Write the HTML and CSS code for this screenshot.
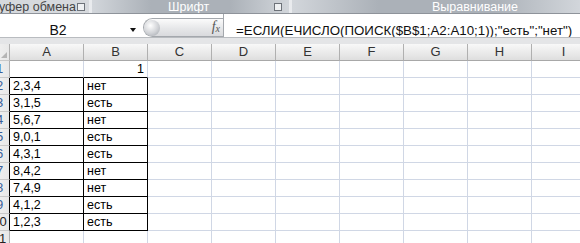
FILE: index.html
```html
<html>
<head>
    <link rel="stylesheet" href="styles.css">
</head>
<body>
    <div class="ribbon">
        <div class="group clip">
            <span class="label">Буфер обмена</span>
            <i class="launcher"></i>
        </div>
        <div class="group font">
            <span class="label">Шрифт</span>
            <i class="launcher"></i>
        </div>
        <div class="group align">
            <span class="label">Выравнивание</span>
        </div>
    </div>

    <div class="formula-bar">
        <div class="name-box">
            <span class="name">B2</span>
            <i class="arrow"></i>
        </div>
        <div class="fx-button">
            <i class="knob"></i>
            <span class="fx">f<sub>x</sub></span>
        </div>
        <div class="formula">=ЕСЛИ(ЕЧИСЛО(ПОИСК($B$1;A2:A10;1));"есть";"нет")</div>
    </div>

    <div class="sheet-gap"></div>

    <div class="sheet">
        <table class="grid">
            <tr class="head">
                <th class="corner"><i class="corner-mark"></i></th>
                <th class="col-a">A</th><th>B</th><th>C</th><th>D</th><th>E</th><th>F</th><th>G</th><th>H</th><th>I</th>
            </tr>
            <tr>
                <th class="row-num">1</th>
                <td class="top"></td><td class="top num">1</td><td></td><td></td><td></td><td></td><td></td><td></td><td></td>
            </tr>
            <tr>
                <th class="row-num boxed">2</th>
                <td class="box">2,3,4</td><td class="box">нет</td><td></td><td></td><td></td><td></td><td></td><td></td><td></td>
            </tr>
            <tr>
                <th class="row-num boxed">3</th>
                <td class="box">3,1,5</td><td class="box">есть</td><td></td><td></td><td></td><td></td><td></td><td></td><td></td>
            </tr>
            <tr>
                <th class="row-num boxed">4</th>
                <td class="box">5,6,7</td><td class="box">нет</td><td></td><td></td><td></td><td></td><td></td><td></td><td></td>
            </tr>
            <tr>
                <th class="row-num boxed">5</th>
                <td class="box">9,0,1</td><td class="box">есть</td><td></td><td></td><td></td><td></td><td></td><td></td><td></td>
            </tr>
            <tr>
                <th class="row-num boxed">6</th>
                <td class="box">4,3,1</td><td class="box">есть</td><td></td><td></td><td></td><td></td><td></td><td></td><td></td>
            </tr>
            <tr>
                <th class="row-num boxed">7</th>
                <td class="box">8,4,2</td><td class="box">нет</td><td></td><td></td><td></td><td></td><td></td><td></td><td></td>
            </tr>
            <tr>
                <th class="row-num boxed">8</th>
                <td class="box">7,4,9</td><td class="box">нет</td><td></td><td></td><td></td><td></td><td></td><td></td><td></td>
            </tr>
            <tr>
                <th class="row-num boxed">9</th>
                <td class="box">4,1,2</td><td class="box">есть</td><td></td><td></td><td></td><td></td><td></td><td></td><td></td>
            </tr>
            <tr>
                <th class="row-num boxed">10</th>
                <td class="box">1,2,3</td><td class="box">есть</td><td></td><td></td><td></td><td></td><td></td><td></td><td></td>
            </tr>
            <tr>
                <th class="row-num">11</th>
                <td></td><td></td><td></td><td></td><td></td><td></td><td></td><td></td><td></td>
            </tr>
        </table>
    </div>
</body>
</html>
```

FILE: styles.css
```css
body {
    margin: 0;
    background-color: #fff;
    font-family: "Liberation Sans", Arial, sans-serif;
    overflow: hidden;
    width: 580px;
    height: 243px;
}

/* ribbon group labels */
.ribbon {
    display: flex;
    height: 13px;
    border-bottom: 1px solid #8e939a;
    background-color: #d4d7dc;
    overflow: hidden;
}

.group {
    flex-shrink: 0;
    display: flex;
    align-items: center;
    box-sizing: border-box;
    height: 13px;
    font-size: 12.5px;
    color: #fff;
    border-right: 3px solid #e9ebee;
    background: linear-gradient(to right, #d2d6db, #abb1b8 30%, #abb1b8 70%, #d2d6db);
    overflow: hidden;
    white-space: nowrap;
}

.group.clip {
    width: 92px;
    background: #d6d9dd;
    color: #444;
}

.group.clip .label {
    margin-left: -9px;
}

.group.font {
    width: 200px;
    padding-left: 76px;
}

.group.align {
    flex: 1;
    padding-left: 140px;
    border-right: none;
}

.launcher {
    flex-shrink: 0;
    width: 6px;
    height: 6px;
    border: 1px solid #6d7279;
    background-color: #eef0f2;
    margin-left: auto;
    margin-right: 4px;
}

.group.font .launcher {
    margin-right: 7px;
}

/* formula bar */
.formula-bar {
    display: flex;
    height: 23px;
    border-bottom: 1px solid #b9bcc0;
    background-color: #fff;
}

.name-box {
    width: 143px;
    display: flex;
    align-items: center;
    padding-top: 9px;
    box-sizing: border-box;
}

.name {
    width: 116px;
    text-align: center;
    font-size: 14px;
    color: #111;
}

.arrow {
    margin-left: 14px;
    border-left: 3px solid transparent;
    border-right: 3px solid transparent;
    border-top: 4px solid #111;
}

.fx-button {
    width: 80px;
    height: 19px;
    margin-top: 4px;
    display: flex;
    align-items: center;
    box-sizing: border-box;
    border: 1px solid #a4a8ad;
    border-right: none;
    border-radius: 10px 0 0 10px;
    background: linear-gradient(#fbfbfb, #e6e7e9 55%, #d9dadd);
}

.knob {
    width: 16px;
    height: 16px;
    border-radius: 50%;
    background: radial-gradient(circle at 40% 35%, #fff, #d0d2d6 55%, #9da2a8);
}

.fx {
    margin-left: auto;
    margin-right: 3px;
    font-family: "Liberation Serif", serif;
    font-style: italic;
    font-size: 14px;
    color: #555;
    line-height: 14px;
}

.fx sub {
    font-size: 10px;
    vertical-align: -1px;
}

.formula {
    flex: 1;
    border-left: 1px solid #a4a8ad;
    padding-left: 12px;
    padding-top: 9px;
    font-size: 13.3px;
    color: #111;
    white-space: nowrap;
    overflow: hidden;
}

.sheet-gap {
    height: 6px;
    background-color: #e4e5e7;
}

/* worksheet grid */
.sheet {
    margin-left: -10px;
    width: 620px;
}

.grid {
    width: 606px;
    border-collapse: separate;
    border-spacing: 0;
    table-layout: fixed;
    font-size: 12.5px;
    color: #000;
}

.grid td,
.grid th {
    height: 16px;
    padding: 0 3px;
    box-sizing: border-box;
    width: 64px;
    border-right: 1px solid #d0d7e5;
    border-bottom: 1px solid #d0d7e5;
    white-space: nowrap;
    overflow: hidden;
    line-height: 16px;
}

.grid tr {
    height: 17px;
}

.head th {
    font-weight: normal;
    font-size: 13px;
    color: #333;
    text-align: center;
    background: linear-gradient(#f8f8f8, #e9e9e9 60%, #dedede);
    border-right: 1px solid #b0b0b0;
    border-bottom: 1px solid #a8a8a8;
}

.head th.col-a,
.grid td:nth-child(2) {
    width: 74px;
}

.grid th.corner,
.grid th.row-num {
    width: 20px;
    padding: 0;
    position: relative;
    font-weight: normal;
    font-size: 13px;
    color: #3a5f9a;
    text-align: center;
    background: linear-gradient(to right, #f4f4f4, #e8e8e8);
    border-right: 1px solid #b0b0b0;
    border-bottom: 1px solid #c9c9c9;
}

.grid tr:nth-child(11) th,
.grid tr:nth-child(12) th {
    color: #222;
}

.corner-mark {
    position: absolute;
    right: 2px;
    bottom: 2px;
    border-left: 6px solid transparent;
    border-bottom: 6px solid #b5b5b5;
}

.grid th.row-num.boxed {
    border-right-color: #000;
}

.num {
    text-align: right;
}

.grid td.top {
    border-bottom-color: #000;
}

.grid td.box {
    border-right-color: #000;
    border-bottom-color: #000;
}
```
